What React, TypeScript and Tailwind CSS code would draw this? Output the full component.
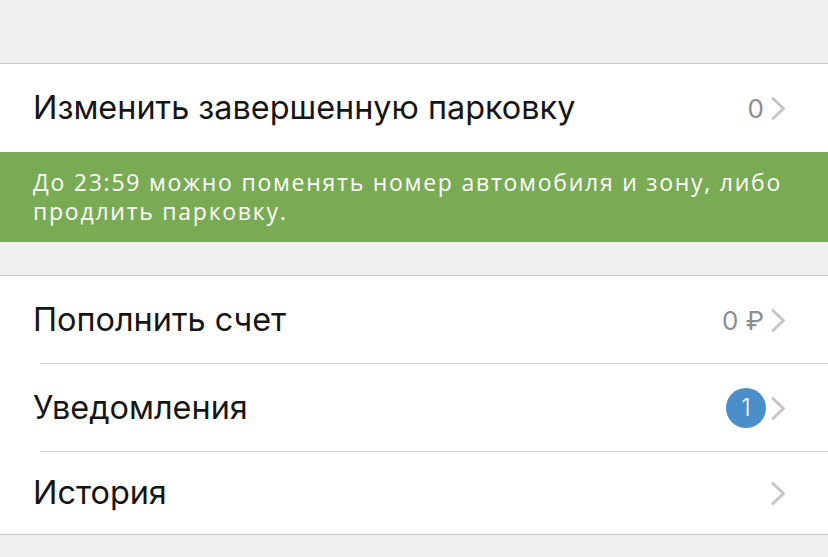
import { ReactNode } from 'react';

function Chevron() {
  return (
    <svg width="15" height="23" viewBox="0 0 15 23" className="shrink-0">
      <path d="M2 1.5 L12.5 11.5 L2 21.5" fill="none" stroke="#c6c6c6" strokeWidth="3" strokeLinecap="round" strokeLinejoin="round" />
    </svg>
  );
}

function Row({
  label,
  right,
  divider,
  height = 'h-[88px]',
}: {
  label: string;
  right?: ReactNode;
  divider?: boolean;
  height?: string;
}) {
  return (
    <div className={`relative flex items-center pl-[33px] pr-[42px] ${height}`}>
      <span className="flex-1 text-[32.4px] leading-none text-[#151515]">{label}</span>
      <div className="flex items-center gap-[7px]">
        {right}
        <Chevron />
      </div>
      {divider && <div className="absolute bottom-0 left-[40px] right-0 h-px bg-[#cdcdcd]" />}
    </div>
  );
}

export default function App() {
  return (
    <div className="h-[557px] w-[828px] overflow-hidden bg-[#efefef] font-['Inter',sans-serif]">
      <div className="h-[63px]" />
      <div className="border-t border-[#c8c8c8] bg-white">
        <Row label="Изменить завершенную парковку" right={<span className="text-[26px] text-[#8e8e8e]">0</span>} />
      </div>
      <div className="h-[90px] bg-[#79ab54] px-[33px] pt-[16px] font-['Open_Sans',sans-serif] text-[23px] leading-[29px] tracking-[1.75px] text-white">
        <p>До 23:59 можно поменять номер автомобиля и зону, либо</p>
        <p>продлить парковку.</p>
      </div>
      <div className="h-[33px]" />
      <div className="border-y border-[#c8c8c8] bg-white">
        <Row label="Пополнить счет" divider right={<span className="text-[26px] text-[#8e8e8e]">0 ₽</span>} />
        <Row
          label="Уведомления"
          divider
          right={
            <span className="-mr-[2px] flex h-[40px] w-[40px] items-center justify-center rounded-full bg-[#4a8fc9] text-[24px] font-light text-white">
              1
            </span>
          }
        />
        <Row label="История" height="h-[82px]" />
      </div>
    </div>
  );
}
